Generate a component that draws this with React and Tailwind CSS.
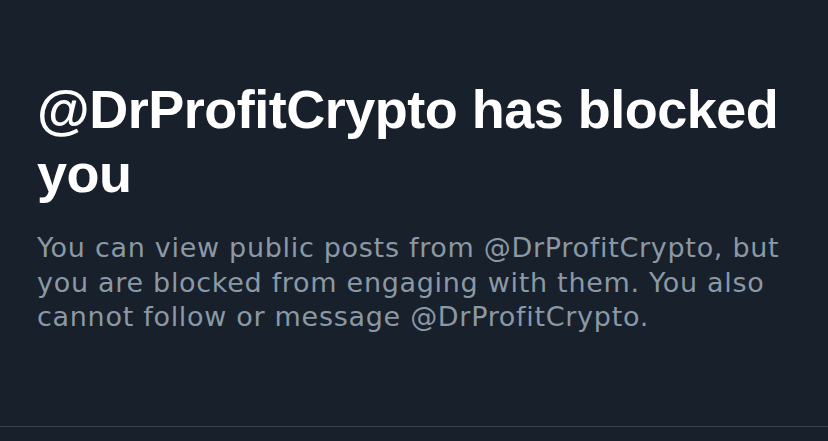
export default function App() {
  return (
    <div className="w-[828px] h-[441px] bg-[#18202b] flex flex-col overflow-hidden">
      <div className="pl-[37px] pr-[20px] pt-[77px] h-[426px]">
        <h1 className="text-[54px] leading-[64px] font-bold text-white tracking-[-0.5px]" style={{ fontFamily: '"Liberation Sans", Arial, sans-serif' }}>
          @DrProfitCrypto has blocked you
        </h1>
        <p className="mt-[26px] text-[27px] leading-[34.5px] tracking-[0.7px] text-[#8b98a5]" style={{ fontFamily: '"DejaVu Sans", sans-serif' }}>
          You can view public posts from @DrProfitCrypto, but<br />you are blocked from engaging with them. You also<br />cannot follow or message @DrProfitCrypto.
        </p>
      </div>
      <div className="h-px bg-[#3a414c]" />
    </div>
  );
}
